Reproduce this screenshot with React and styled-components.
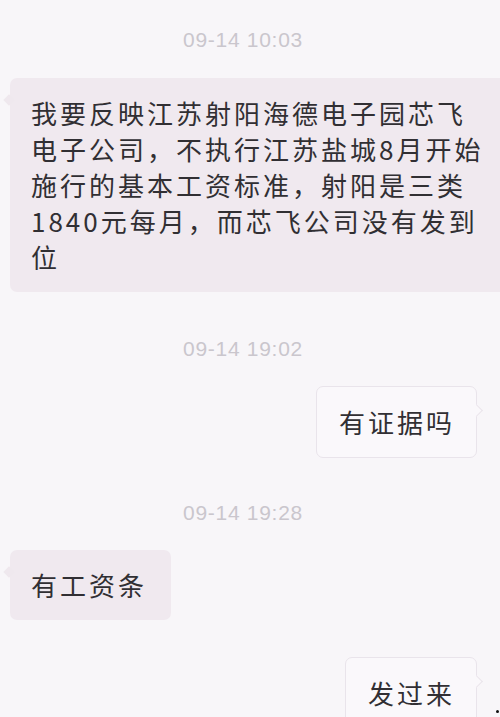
import React from "react";
import styled, { createGlobalStyle, css } from "styled-components";

const GlobalStyle = createGlobalStyle`
  html, body {
    margin: 0;
    padding: 0;
    background: #f8f6f9;
    overflow: hidden;
  }
`;

const Screen = styled.div`
  position: relative;
  width: 500px;
  height: 717px;
  overflow: hidden;
  background: #f8f6f9;
  display: flex;
  flex-direction: column;
  padding-top: 28px;
  box-sizing: border-box;
  font-family: "Noto Sans CJK SC", "Noto Sans", sans-serif;
`;

const Stamp = styled.div`
  align-self: center;
  margin-left: -14px;
  font-family: "Liberation Sans", Arial, sans-serif;
  font-size: 21px;
  line-height: 24px;
  letter-spacing: 0.7px;
  color: #cac6cd;
  margin-top: ${p => p.$gap || 0}px;
`;

const Row = styled.div`
  display: flex;
  justify-content: ${p => (p.$mine ? "flex-end" : "flex-start")};
  padding: ${p => (p.$mine ? "0 23px 0 0" : "0 0 0 10px")};
  margin-top: ${p => p.$gap}px;
`;

const Bubble = styled.div`
  position: relative;
  box-sizing: border-box;
  padding: 17px 24px 17px 21px;
  border-radius: 7px;
  font-size: 26px;
  line-height: 36px;
  letter-spacing: 3px;
  color: #312f33;
  white-space: nowrap;

  ${p =>
    p.$mine
      ? css`
          background: #faf8fb;
          border: 1px solid #e9e4eb;
          padding: 17px 21px 17px 22px;
          &::after {
            content: "";
            position: absolute;
            right: -5px;
            top: 19px;
            width: 8px;
            height: 8px;
            background: #faf8fb;
            border-top: 1px solid #e9e4eb;
            border-right: 1px solid #e9e4eb;
            transform: rotate(45deg);
          }
        `
      : css`
          background: #f0e9ef;
          &::after {
            content: "";
            position: absolute;
            left: -5px;
            top: 18px;
            width: 8px;
            height: 8px;
            background: #efe8ee;
            transform: rotate(45deg);
          }
        `}

  ${p =>
    p.$wide &&
    css`
      flex: 1;
      border-radius: 7px 0 0 7px;
    `}
`;

const Line = styled.span`
  display: block;
`;

const Speck = styled.span`
  position: absolute;
  right: 1px;
  bottom: 4px;
  width: 3px;
  height: 3px;
  border-radius: 50%;
  background: #111;
`;

const longLines = [
  "我要反映江苏射阳海德电子园芯飞",
  "电子公司，不执行江苏盐城8月开始",
  "施行的基本工资标准，射阳是三类",
  "1840元每月，而芯飞公司没有发到",
  "位",
];

export default function App() {
  return (
    <>
      <GlobalStyle />
      <Screen>
        <Stamp>09-14 10:03</Stamp>
        <Row $gap={26}>
          <Bubble $wide>
            {longLines.map(l => (
              <Line key={l}>{l}</Line>
            ))}
          </Bubble>
        </Row>

        <Stamp $gap={45}>09-14 19:02</Stamp>
        <Row $mine $gap={25}>
          <Bubble $mine>有证据吗</Bubble>
        </Row>

        <Stamp $gap={43}>09-14 19:28</Stamp>
        <Row $gap={25}>
          <Bubble>有工资条</Bubble>
        </Row>

        <Row $mine $gap={37}>
          <Bubble $mine>发过来</Bubble>
        </Row>
        <Speck />
      </Screen>
    </>
  );
}
